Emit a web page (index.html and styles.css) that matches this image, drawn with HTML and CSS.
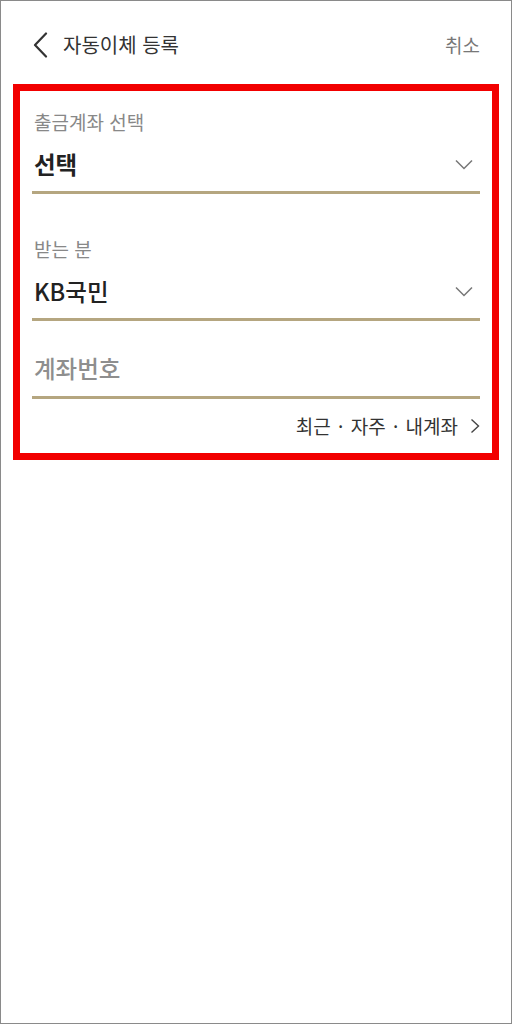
FILE: index.html
```html
<!DOCTYPE html>
<html lang="ko">
<head>
<meta charset="utf-8">
<title>자동이체 등록</title>
<link rel="stylesheet" href="styles.css">
</head>
<body>
<div class="screen">
  <header class="topbar">
    <div class="topbar-left">
      <svg class="back" width="15" height="26" viewBox="0 0 15 26"><path d="M13 1.5 L2 13 L13 24.5" fill="none" stroke="#333" stroke-width="2.2" stroke-linecap="round" stroke-linejoin="round"/></svg>
      <span class="title">자동이체 등록</span>
    </div>
    <span class="cancel">취소</span>
  </header>

  <section class="form">
    <div class="field">
      <div class="label">출금계좌 선택</div>
      <div class="value-row">
        <span class="value bold">선택</span>
        <svg class="chev" width="18" height="11" viewBox="0 0 18 11"><path d="M1 1.5 L9 9.5 L17 1.5" fill="none" stroke="#777" stroke-width="1.5"/></svg>
      </div>
    </div>

    <div class="field gap">
      <div class="label">받는 분</div>
      <div class="value-row">
        <span class="value">KB국민</span>
        <svg class="chev" width="18" height="11" viewBox="0 0 18 11"><path d="M1 1.5 L9 9.5 L17 1.5" fill="none" stroke="#777" stroke-width="1.5"/></svg>
      </div>
    </div>

    <div class="field input-field">
      <div class="value-row">
        <span class="value placeholder">계좌번호</span>
      </div>
    </div>

    <div class="links">
      <span class="link-text">최근 · 자주 · 내계좌</span>
      <svg class="link-chev" width="10" height="16" viewBox="0 0 10 16"><path d="M1.5 1.5 L8.5 8 L1.5 14.5" fill="none" stroke="#444" stroke-width="1.4"/></svg>
    </div>
  </section>
</div>
</body>
</html>
```

FILE: styles.css
```css
* { box-sizing: border-box; }
html, body { margin: 0; padding: 0; }
body {
  background: #fff;
  font-family: "Noto Sans CJK KR", "Noto Sans", sans-serif;
  color: #333;
}
.screen {
  width: 512px;
  height: 1024px;
  border: 1px solid #8a8a8a;
}
.topbar {
  height: 83px;
  display: flex;
  align-items: center;
  justify-content: space-between;
  padding: 5px 31px 0 32px;
}
.topbar-left {
  display: flex;
  align-items: center;
}
.back { display: block; margin-right: 15px; }
.title {
  font-size: 20px;
  color: #333;
  line-height: 28px;
}
.cancel {
  font-size: 19px;
  color: #777;
  line-height: 28px;
}
.form {
  margin: 0 12px;
  border: 7px solid #f20000;
  padding: 19px 12px 15px 12px;
}
.field {
  border-bottom: 3px solid #b5a680;
}
.field.gap { margin-top: 43px; }
.field.input-field { margin-top: 25px; }
.label {
  font-size: 19px;
  line-height: 24px;
  color: #888;
  margin-bottom: 8px;
  padding-left: 2px;
}
.value-row {
  display: flex;
  align-items: center;
  justify-content: space-between;
  height: 49px;
  padding-bottom: 5px;
  padding-left: 2px;
}
.input-field .value-row { height: 50px; padding-bottom: 6px; }
.value {
  font-size: 23.5px;
  line-height: 44px;
  color: #222;
  font-weight: 500;
}
.value.bold { font-weight: 700; }
.value.placeholder { color: #8e8e8e; }
.chev { display: block; margin-right: 7px; }
.links {
  display: flex;
  justify-content: flex-end;
  align-items: center;
  margin-top: 15px;
  font-size: 19px;
  line-height: 24px;
  color: #333;
}
.link-text { word-spacing: 2px; }
.link-chev { display: block; margin-left: 12px; }
```
